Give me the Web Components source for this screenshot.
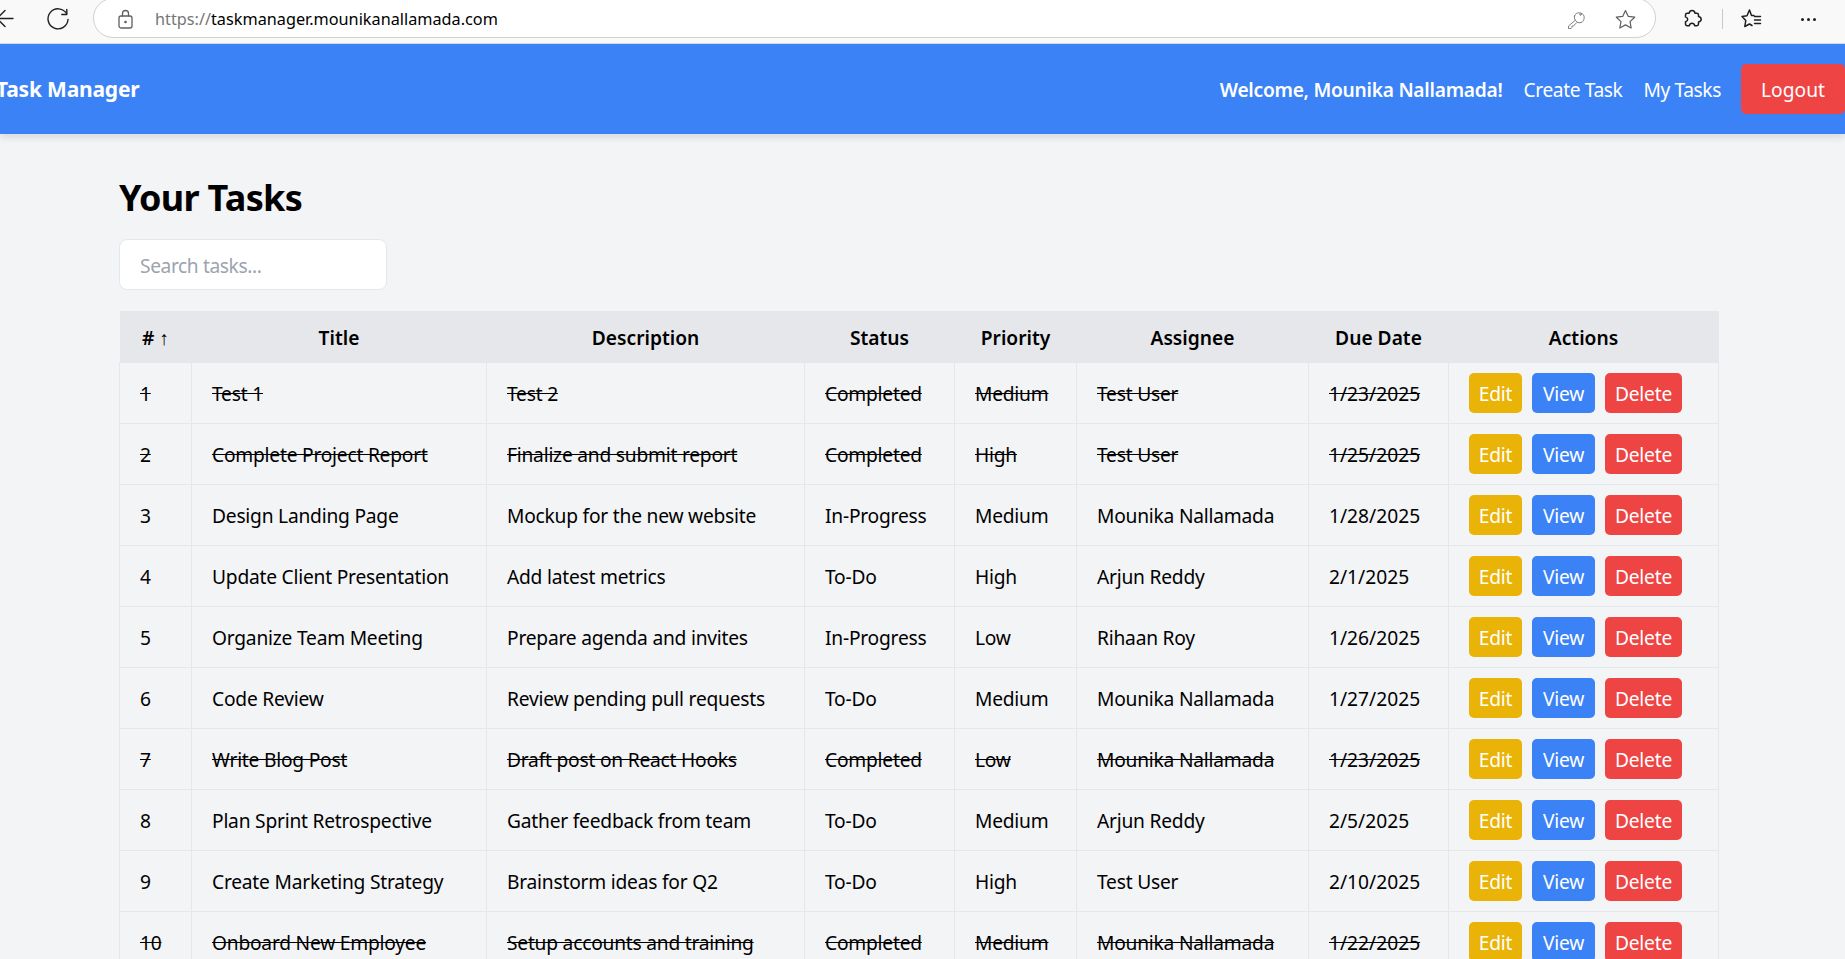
<!DOCTYPE html>
<html lang="en">
<head>
<meta charset="utf-8">
<title>Task Manager</title>
<style>
    html, body { margin: 0; height: 100%; overflow: hidden; }
    body {
        background: #f3f4f6;
        color: #000;
        font-family: 'Noto Sans', 'Open Sans', sans-serif;
    }
</style>
</head>
<body>
<browser-bar url="taskmanager.mounikanallamada.com"></browser-bar>
<app-header user="Mounika Nallamada"></app-header>
<task-page heading="Your Tasks"></task-page>

<script>
// Toolbar glyphs of the browser
const ICONS = {
    back: '<path d="M13 18.500H-4M5 10.500l-8 8 8 8" />',
    reload: '<path d="M66.500 13.500A10 10 0 1 0 68 19.500" /><path d="M66.800 9.500v5h-5" />',
    lock: '<rect x="2" y="7" width="13" height="12" rx="2" /><path d="M5.500 7V4.500a3 3 0 0 1 6 0V7" /><circle cx="8.500" cy="13" r=".7" fill="currentColor" />',
    key: '<path d="M8 11.500 1.500 17v2.500h2.500l1-1.200v-1.300h1.500l3-3.200" /><path d="M7.500 7a5 5 0 1 1 4.500 6.800A5.500 5.500 0 0 1 7.500 7z" /><circle cx="13.500" cy="5.500" r=".8" />',
    star: '<path d="M10.500 1.500l2.800 5.900 6.400.8-4.700 4.400 1.200 6.400-5.700-3.100-5.700 3.100 1.200-6.400L1.300 8.200l6.400-.8z" />',
    puzzle: '<path d="M9 1.500c1.600 0 2.700 1 3 2.700h1.800c1 0 1.700.7 1.700 1.700v1.600c1.700.3 2.700 1.300 2.700 2.800s-1 2.500-2.700 2.800v1.900c0 1-.7 1.700-1.700 1.700h-2c-.4-1.500-1.400-2.400-2.800-2.400s-2.400.9-2.800 2.400H4.200c-1 0-1.700-.7-1.700-1.700v-2.200c1.400-.4 2.200-1.300 2.200-2.600S3.900 8.300 2.500 7.900V5.900c0-1 .7-1.700 1.700-1.700h2C6.500 2.500 7.500 1.500 9 1.500z" />',
    favorites: '<path d="M13 6.500h-2.500L8.500 1 6 6.800l-5 .7 3.800 4-1 6 4.700-2.500 2.500 1.500" /><path d="M13.500 7.500h6M13.500 11h6M13.500 14.500h6" />',
};

function icon(name, width, height, box, stroke = '#1f1f1f', weight = 1.5) {
    return `<svg width="${width}" height="${height}" viewBox="${box}" fill="none" stroke="${stroke}" stroke-width="${weight}" stroke-linejoin="round" stroke-linecap="round">${ICONS[name]}</svg>`;
}

class BrowserBar extends HTMLElement {
    constructor() {
        super();
        this.attachShadow({ mode: 'open' });
        this.shadowRoot.innerHTML = `
            <style>
                :host {
                    display: flex;
                    height: 44px;
                    box-sizing: border-box;
                    background: #f9f9f9;
                    border-bottom: 1px solid #d5dbe3;
                    font-family: 'Noto Sans', sans-serif;
                }
                .nav { width: 93px; flex: none; }
                .nav svg { display: block; }
                .address {
                    width: 1563px;
                    height: 40px;
                    margin-top: -2px;
                    flex: none;
                    box-sizing: border-box;
                    display: flex;
                    align-items: center;
                    padding: 2px 19px 0 23px;
                    background: #fff;
                    border: 1px solid #d0d0d0;
                    border-radius: 20px;
                }
                .lock { margin-right: 21px; display: flex; color: #5f5f5f; }
                .url { flex: 1; font-size: 16.25px; color: #000; white-space: nowrap; }
                .url span { color: #767676; }
                .key { display: flex; margin-right: 30px; }
                .star { display: flex; }
                .tools { display: flex; align-items: center; height: 38px; }
                .ext { display: flex; margin-left: 27px; }
                .divider { width: 1px; height: 20px; background: #c8c8c8; margin: 0 18px 0 19px; }
                .fav { display: flex; }
                .dots { display: flex; gap: 3px; margin-left: 39px; }
                .dots i { width: 3px; height: 3px; border-radius: 50%; background: #1f1f1f; }
            </style>
            <div class="nav">
                <svg width="93" height="38" viewBox="0 0 93 38" fill="none" stroke="#1f1f1f" stroke-width="1.4" stroke-linejoin="round" stroke-linecap="round">${ICONS.back}${ICONS.reload}</svg>
            </div>
            <div class="address">
                <span class="lock">${icon('lock', 17, 20, '0 0 17 20', '#5f5f5f', 1.3)}</span>
                <span class="url"><span>https://</span>${this.getAttribute('url')}</span>
                <span class="key">${icon('key', 18, 20, '0 0 18 20', '#808080', 1)}</span>
                <span class="star">${icon('star', 21, 20, '0 0 21 20', '#5f5f5f', 1.2)}</span>
            </div>
            <div class="tools">
                <span class="ext">${icon('puzzle', 20, 20, '0 0 20 20')}</span>
                <span class="divider"></span>
                <span class="fav">${icon('favorites', 21, 20, '0 0 21 20')}</span>
                <span class="dots"><i></i><i></i><i></i></span>
            </div>
        `;
    }
}

class AppHeader extends HTMLElement {
    constructor() {
        super();
        this.attachShadow({ mode: 'open' });
        this.shadowRoot.innerHTML = `
            <style>
                :host {
                    display: flex;
                    align-items: center;
                    height: 90px;
                    background: #3b82f6;
                    color: #fff;
                    box-shadow: 0 4px 7px rgba(0, 0, 0, 0.1);
                    position: relative;
                    font-size: 19.2px;
                }
                .brand { font-size: 21px; font-weight: 700; letter-spacing: -0.2px; margin-left: -4px; }
                nav { margin-left: auto; display: flex; align-items: center; }
                .welcome { font-weight: 600; letter-spacing: -0.26px; margin-right: 21px; }
                a { color: inherit; text-decoration: none; letter-spacing: -0.4px; margin-right: 21px; }
                a:last-of-type { margin-right: 20px; }
                .logout {
                    width: 104px;
                    height: 50px;
                    display: flex;
                    align-items: center;
                    justify-content: center;
                    background: #ef4444;
                    border-radius: 5px;
                }
            </style>
            <div class="brand">Task Manager</div>
            <nav>
                <span class="welcome">Welcome, ${this.getAttribute('user')}!</span>
                <a href="#">Create Task</a>
                <a href="#">My Tasks</a>
                <span class="logout">Logout</span>
            </nav>
        `;
    }
}

class ActionButton extends HTMLElement {
    constructor() {
        super();
        this.attachShadow({ mode: 'open' });
        this.shadowRoot.innerHTML = `
            <style>
                :host {
                    display: inline-flex;
                    align-items: center;
                    justify-content: center;
                    width: var(--btn-width, auto);
                    height: 40px;
                    box-sizing: border-box;
                    border-radius: 5px;
                    color: #fff;
                    background: var(--btn, #3b82f6);
                }
            </style>
            <slot></slot>
        `;
    }
}

const TASKS = [
    [1, 'Test 1', 'Test 2', 'Completed', 'Medium', 'Test User', '1/23/2025'],
    [2, 'Complete Project Report', 'Finalize and submit report', 'Completed', 'High', 'Test User', '1/25/2025'],
    [3, 'Design Landing Page', 'Mockup for the new website', 'In-Progress', 'Medium', 'Mounika Nallamada', '1/28/2025'],
    [4, 'Update Client Presentation', 'Add latest metrics', 'To-Do', 'High', 'Arjun Reddy', '2/1/2025'],
    [5, 'Organize Team Meeting', 'Prepare agenda and invites', 'In-Progress', 'Low', 'Rihaan Roy', '1/26/2025'],
    [6, 'Code Review', 'Review pending pull requests', 'To-Do', 'Medium', 'Mounika Nallamada', '1/27/2025'],
    [7, 'Write Blog Post', 'Draft post on React Hooks', 'Completed', 'Low', 'Mounika Nallamada', '1/23/2025'],
    [8, 'Plan Sprint Retrospective', 'Gather feedback from team', 'To-Do', 'Medium', 'Arjun Reddy', '2/5/2025'],
    [9, 'Create Marketing Strategy', 'Brainstorm ideas for Q2', 'To-Do', 'High', 'Test User', '2/10/2025'],
    [10, 'Onboard New Employee', 'Setup accounts and training', 'Completed', 'Medium', 'Mounika Nallamada', '1/22/2025'],
];

const COLUMNS = [
    ['# ↑', 72], ['Title', 295], ['Description', 318], ['Status', 150],
    ['Priority', 122], ['Assignee', 232], ['Due Date', 140], ['Actions', 270],
];

class TaskTable extends HTMLElement {
    constructor() {
        super();
        this.attachShadow({ mode: 'open' });
        this.shadowRoot.innerHTML = `
            <style>
                :host { display: block; font-size: 19.2px; }
                table {
                    width: 1599px;
                    table-layout: fixed;
                    border-collapse: collapse;
                }
                th {
                    height: 49px;
                    padding: 2px 0 0;
                    background: #e5e7eb;
                    font-weight: 600;
                    text-align: center;
                }
                td {
                    height: 40px;
                    padding: 10px 20px;
                    border: 1px solid #e5e7eb;
                    white-space: nowrap;
                    letter-spacing: -0.22px;
                }
                td:nth-child(7) { letter-spacing: 0; }
                tr.done td:not(:last-child) { text-decoration: line-through; }
                .actions { display: flex; gap: 10px; }
                .edit { --btn: #eab308; --btn-width: 53px; }
                .view { --btn: #3b82f6; --btn-width: 63px; }
                .delete { --btn: #ef4444; --btn-width: 77px; }
            </style>
            <table>
                <colgroup>${COLUMNS.map(c => `<col style="width:${c[1]}px">`).join('')}</colgroup>
                <thead><tr>${COLUMNS.map(c => `<th>${c[0]}</th>`).join('')}</tr></thead>
                <tbody>
                    ${TASKS.map(task => `
                        <tr class="${task[3] === 'Completed' ? 'done' : ''}">
                            ${task.map(value => `<td>${value}</td>`).join('')}
                            <td><div class="actions">
                                <action-button class="edit">Edit</action-button>
                                <action-button class="view">View</action-button>
                                <action-button class="delete">Delete</action-button>
                            </div></td>
                        </tr>
                    `).join('')}
                </tbody>
            </table>
        `;
    }
}

class SearchBox extends HTMLElement {
    constructor() {
        super();
        this.attachShadow({ mode: 'open' });
        this.shadowRoot.innerHTML = `
            <style>
                :host { display: block; width: 268px; }
                input {
                    display: block;
                    width: 100%;
                    height: 51px;
                    box-sizing: border-box;
                    padding: 2px 20px 0;
                    background: #fff;
                    border: 1px solid #e5e7eb;
                    border-radius: 8px;
                    outline: none;
                    font: inherit;
                    font-size: 19.2px;
                    letter-spacing: -0.4px;
                }
                input::placeholder { color: #9ca3af; opacity: 1; }
            </style>
            <input type="text" placeholder="${this.getAttribute('placeholder')}">
        `;
    }
}

class TaskPage extends HTMLElement {
    constructor() {
        super();
        this.attachShadow({ mode: 'open' });
        this.shadowRoot.innerHTML = `
            <style>
                :host { display: block; padding: 40px 0 0 119px; }
                h1 {
                    margin: 0 0 17px;
                    font-size: 36px;
                    line-height: 48px;
                    font-weight: 700;
                    letter-spacing: -0.7px;
                }
                search-box { margin-bottom: 21px; }
            </style>
            <h1>${this.getAttribute('heading')}</h1>
            <search-box placeholder="Search tasks..."></search-box>
            <task-table></task-table>
        `;
    }
}

customElements.define('browser-bar', BrowserBar);
customElements.define('app-header', AppHeader);
customElements.define('action-button', ActionButton);
customElements.define('search-box', SearchBox);
customElements.define('task-table', TaskTable);
customElements.define('task-page', TaskPage);
</script>
</body>
</html>
